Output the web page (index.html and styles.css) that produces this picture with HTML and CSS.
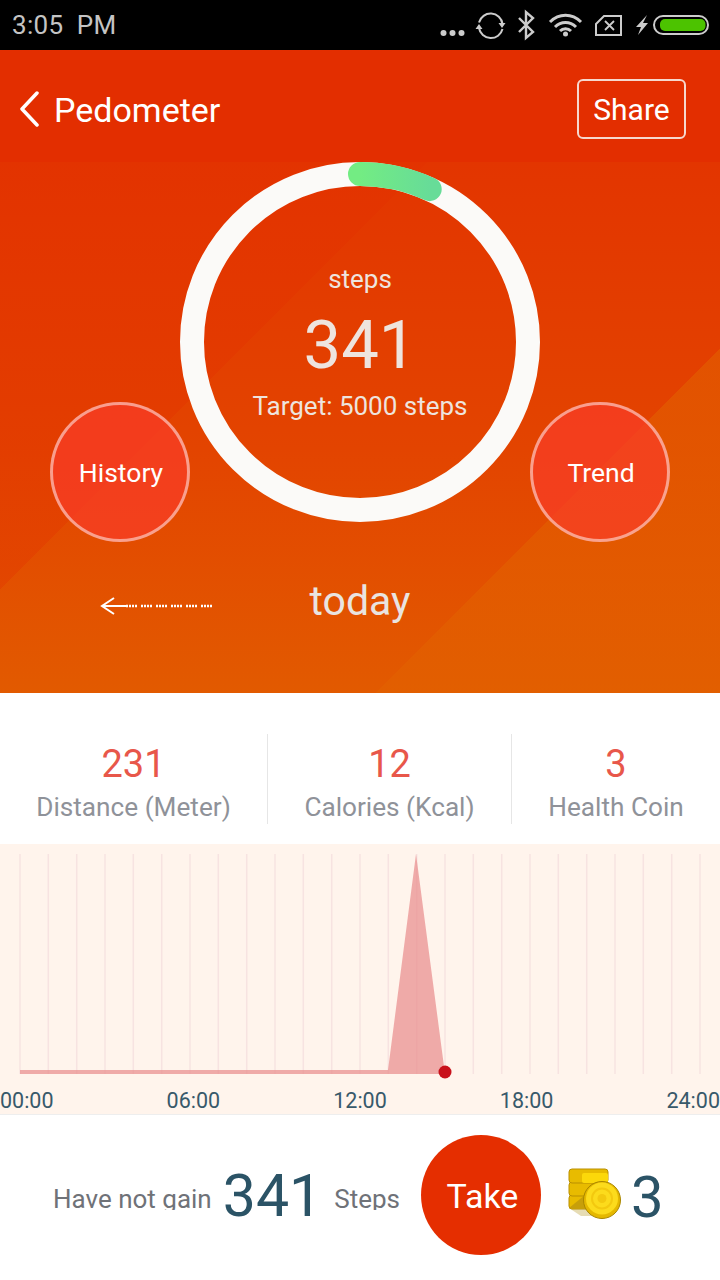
FILE: index.html
```html
<!DOCTYPE html>
<html lang="en">
<head>
    <meta charset="UTF-8">
    <meta name="viewport" content="width=device-width, initial-scale=1.0">
    <title>Pedometer</title>
    <link rel="stylesheet" href="styles.css">
</head>
<body>
    <div class="statusbar">
        <span class="clock">3:05&nbsp;&nbsp;PM</span>
        <svg class="status-icons" width="290" height="50" viewBox="430 0 290 50">
            <circle cx="443.500" cy="33" r="3" fill="#ccc"/>
            <circle cx="452.500" cy="33" r="3" fill="#ccc"/>
            <circle cx="461.500" cy="33" r="3" fill="#ccc"/>
            <path d="M479 22.500A12 12 0 0 1 502.500 24M502.500 29A12 12 0 0 1 479 28" fill="none" stroke="#ccc" stroke-width="2"/>
            <path d="M498.500 23h7l-3.500 5zM475.500 29h7l-3.500-5z" fill="#ccc"/>
            <path d="M519 18l14 14-7 6V12l7 6-14 14" fill="none" stroke="#ccc" stroke-width="2.400"/>
            <path d="M550 22c9-9 22-9 31 0M555 27c6-6 15-6 21 0M560 31c3-3 8-3 11 0" fill="none" stroke="#ccc" stroke-width="3"/>
            <circle cx="565.500" cy="34" r="2.500" fill="#ccc"/>
            <path d="M596 24l8-8h17v19h-25z" fill="none" stroke="#ccc" stroke-width="2"/>
            <path d="M605 21l9 9M614 21l-9 9" stroke="#ccc" stroke-width="1.800"/>
            <path d="M647 15l-11 12h5l-3 8 10-12h-5z" fill="#ccc"/>
            <rect x="654" y="16" width="54" height="18" rx="9" fill="none" stroke="#ccc" stroke-width="2"/>
            <rect x="660" y="19" width="45.500" height="12" rx="5" fill="#4cc300"/>
        </svg>
    </div>

    <div class="hero">
        <div class="topbar">
            <div class="title">
                <svg width="20" height="36" viewBox="0 0 20 36">
                    <path d="M18 2L3 18l15 16" fill="none" stroke="#fff" stroke-width="3.500" stroke-linecap="round" stroke-linejoin="round"/>
                </svg>
                <span>Pedometer</span>
            </div>
            <div class="share">Share</div>
        </div>

        <div class="dial-row">
            <div class="side-buttons">
                <div class="round-btn">History</div>
                <div class="round-btn">Trend</div>
            </div>
            <div class="dial">
                <svg class="ring" width="360" height="360" viewBox="0 0 360 360">
                    <defs>
                        <linearGradient id="arc" x1="0" y1="0" x2="1" y2="0">
                            <stop offset="0" stop-color="#73ec83"/>
                            <stop offset="1" stop-color="#67dc98"/>
                        </linearGradient>
                    </defs>
                    <circle cx="180" cy="180" r="168" fill="none" stroke="#fbfaf8" stroke-width="24"/>
                    <path d="M180 12A168 168 0 0 1 249.700 27.100" fill="none" stroke="url(#arc)" stroke-width="24" stroke-linecap="round"/>
                </svg>
                <div class="dial-text">
                    <div class="dial-label">steps</div>
                    <div class="dial-count">341</div>
                    <div class="dial-label">Target: 5000 steps</div>
                </div>
            </div>
        </div>

        <div class="day-row">
            <svg class="day-arrow" width="114" height="24" viewBox="0 0 114 24">
                <path d="M15 4L3 12l12 8M3 12h25" fill="none" stroke="#fff" stroke-width="2"/>
                <path d="M27 12h86" fill="none" stroke="#fff" stroke-width="2.500" stroke-dasharray="2 1 2 1 2 1 2 4"/>
            </svg>
            <div class="day">today</div>
        </div>
    </div>

    <div class="stats">
        <div class="stat stat-distance">
            <div class="stat-num">231</div>
            <div class="stat-name">Distance (Meter)</div>
        </div>
        <div class="stat stat-calories">
            <div class="stat-num">12</div>
            <div class="stat-name">Calories (Kcal)</div>
        </div>
        <div class="stat stat-coin">
            <div class="stat-num">3</div>
            <div class="stat-name">Health Coin</div>
        </div>
    </div>

    <div class="chart">
        <svg class="plot" width="720" height="230" viewBox="0 0 720 230">
            <path d="M20 10V230M48.300 10V230M76.700 10V230M105 10V230M133.300 10V230M161.700 10V230M190 10V230M218.300 10V230M246.700 10V230M275 10V230M303.300 10V230M331.700 10V230M360 10V230M388.300 10V230M416.700 10V230M445 10V230M473.300 10V230M501.700 10V230M530 10V230M558.300 10V230M586.700 10V230M615 10V230M643.300 10V230M671.700 10V230M700 10V230" stroke="#f7e3e1" stroke-width="1.500"/>
            <path d="M20 230V226H388L416 10L445 230Z" fill="#e98e8e" fill-opacity="0.72"/>
            <circle cx="445" cy="228" r="6.500" fill="#c9111b"/>
        </svg>
        <div class="axis">
            <span>00:00</span>
            <span>06:00</span>
            <span>12:00</span>
            <span>18:00</span>
            <span>24:00</span>
        </div>
    </div>

    <div class="footer">
        <span class="clip-label label-gain">Have not gain</span>
        <span class="gain-num">341</span>
        <span class="clip-label label-steps">Steps</span>
        <div class="take">Take</div>
        <svg class="coins" width="56" height="56" viewBox="0 0 56 56">
            <path d="M1 42h30l6 8-24 0z" fill="#e6dcb4"/>
            <rect x="1" y="29" width="39" height="14" rx="3" fill="#e8bb00" stroke="#b98f00"/>
            <rect x="1" y="16" width="39" height="14" rx="3" fill="#e8bb00" stroke="#b98f00"/>
            <rect x="1" y="3" width="39" height="14" rx="3" fill="#e8bb00" stroke="#b98f00"/>
            <rect x="14" y="7" width="26" height="10" rx="2" fill="#fcd80a"/>
            <path d="M1 42l16-13v14H4z" fill="#c79f0a"/>
            <circle cx="34" cy="34" r="18.500" fill="#e5b800" stroke="#a98600"/>
            <circle cx="34" cy="32.500" r="16" fill="#fcdb1c"/>
            <circle cx="34" cy="32.500" r="10" fill="none" stroke="#f3c90f" stroke-width="2"/>
            <circle cx="34" cy="32.500" r="4.500" fill="#f3c90f"/>
        </svg>
        <span class="coin-num">3</span>
    </div>
</body>
</html>
```

FILE: styles.css
```css
* {
    box-sizing: border-box;
}
body {
    margin: 0;
    width: 720px;
    height: 1280px;
    overflow: hidden;
    font-family: 'Roboto', sans-serif;
    background-color: white;
}

/* status bar */
.statusbar {
    height: 50px;
    background: black;
    display: flex;
    justify-content: space-between;
    align-items: center;
    padding-left: 12px;
}
.clock {
    font-size: 26px;
    letter-spacing: 0.3px;
    color: #c4c4c4;
}
.status-icons {
    display: block;
}

/* red top area */
.hero {
    height: 643px;
    padding-top: 29px;
    background:
        linear-gradient(135deg, transparent 74.7%, rgba(226, 98, 0, 0.55) 74.7%),
        linear-gradient(135deg, rgba(227, 46, 0, 0.3) 39.6%, transparent 39.6%),
        linear-gradient(to bottom, #e32e00 0, #e32e00 112px, #e33500 112px, #e34400 62%, #e25a00 100%);
}
.topbar {
    height: 59px;
    display: flex;
    justify-content: space-between;
    align-items: center;
    padding: 0 34px 0 19px;
}
.title {
    display: flex;
    align-items: center;
    gap: 15px;
    font-size: 34px;
    color: white;
}
.title span {
    margin-top: 2px;
}
.title svg {
    display: block;
}
.share {
    width: 109px;
    height: 60px;
    line-height: 58px;
    text-align: center;
    font-size: 30px;
    color: white;
    border: 2px solid #f6d8ce;
    border-radius: 6px;
}
.dial-row {
    margin-top: 24px;
    height: 380px;
    display: grid;
}
.dial-row > * {
    grid-area: 1 / 1;
}
.dial {
    width: 360px;
    height: 360px;
    justify-self: center;
    display: grid;
}
.dial > * {
    grid-area: 1 / 1;
}
.dial-text {
    padding-top: 99px;
    text-align: center;
    color: #eee4de;
}
.dial-label {
    font-size: 26px;
    line-height: 36px;
}
.dial-count {
    font-size: 67px;
    line-height: 80px;
    margin: 8px 0 3px;
}
.side-buttons {
    display: flex;
    justify-content: space-between;
    align-items: flex-end;
    padding: 0 50px;
}
.round-btn {
    width: 140px;
    height: 140px;
    padding: 1px 0 0 2px;
    border-radius: 50%;
    border: 3px solid rgba(255, 255, 255, 0.5);
    background: rgba(250, 60, 40, 0.7);
    display: flex;
    justify-content: center;
    align-items: center;
    font-size: 26.500px;
    color: white;
}
.day-row {
    margin-top: 34px;
    height: 50px;
    display: grid;
    grid-template-columns: 1fr auto 1fr;
    align-items: center;
}
.day-arrow {
    margin-left: 99px;
    margin-top: 9px;
}
.day {
    font-size: 41px;
    color: #e9e4e0;
}

/* three numbers */
.stats {
    height: 151px;
    padding-top: 41px;
    display: flex;
}
.stat {
    height: 90px;
    text-align: center;
    border-right: 1px solid #e6e6e6;
}
.stat-distance {
    width: 268px;
}
.stat-calories {
    width: 244px;
}
.stat-coin {
    width: 208px;
    border-right: none;
}
.stat-num {
    font-size: 38px;
    line-height: 54px;
    margin-top: 3px;
    color: #e8574a;
}
.stat-name {
    font-size: 26.200px;
    line-height: 34px;
    margin-top: -1px;
    color: #8f9299;
}

/* chart */
.chart {
    height: 271px;
    background: #fff4ec;
    border-bottom: 1px solid #eeeeee;
}
.plot {
    display: block;
    overflow: visible;
}
.axis {
    display: flex;
    justify-content: space-between;
    font-size: 21.500px;
    line-height: 30px;
    margin-top: 12px;
    color: #38596a;
}

/* bottom row */
.footer {
    height: 165px;
    padding: 0 0 5px 53px;
    display: flex;
    align-items: center;
}
.clip-label {
    height: 29px;
    line-height: 36px;
    overflow: hidden;
    font-size: 26px;
    color: #6f7278;
}
.gain-num {
    font-size: 59px;
    color: #2b5366;
    margin: 0 12px 0 11px;
}
.take {
    width: 120px;
    height: 120px;
    margin-left: 21px;
    padding-left: 3px;
    border-radius: 50%;
    background: #e52e00;
    color: white;
    font-size: 34px;
    text-align: center;
    line-height: 122px;
}
.coins {
    margin-left: 27px;
    margin-top: -2px;
}
.coin-num {
    font-size: 58px;
    color: #2b5366;
    margin: 3px 0 0 7px;
}
```
